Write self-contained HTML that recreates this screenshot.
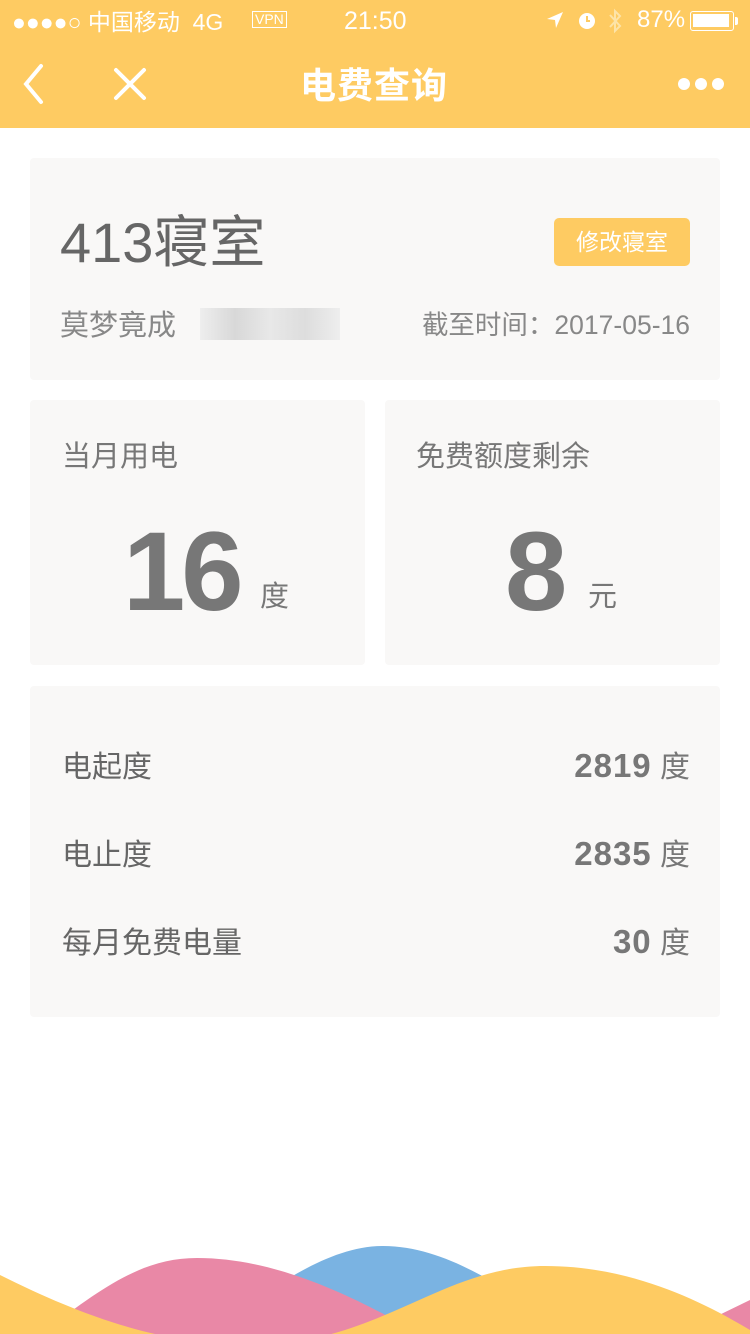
<!DOCTYPE html>
<html><head><meta charset="utf-8"><style>
*{margin:0;padding:0;box-sizing:border-box}
body{width:750px;height:1334px;background:#fff;position:relative;overflow:hidden;font-family:"Liberation Sans","Noto Sans CJK SC",sans-serif;color:#666}
.hdr{position:absolute;left:0;top:0;width:750px;height:128px;background:#fecb62;color:#fff}
.abs{position:absolute;white-space:nowrap;line-height:1.2}
.card{position:absolute;background:#f9f8f7;border-radius:4px}
</style></head><body>
<div class="hdr">
 <div class="abs" style="left:12px;top:9px;font-size:23px">●●●●○ 中国移动&nbsp;&nbsp;4G</div>
 <div class="abs" style="left:252px;top:11px;font-size:14px;border:1.5px solid #fff;padding:0 2px;line-height:15px">VPN</div>
 <div class="abs" style="left:344px;top:6px;font-size:25px">21:50</div>
 <svg class="abs" style="left:545px;top:10px" width="20" height="20"><path d="M2 9 L18 2 L11 18 L10 10 Z" fill="#fff"/></svg>
 <svg class="abs" style="left:576px;top:9px" width="22" height="22"><circle cx="11" cy="12" r="8" fill="#fff"/><path d="M11 7 V12 H14" stroke="#fecb62" stroke-width="2" fill="none"/></svg>
 <svg class="abs" style="left:607px;top:8px" width="16" height="26"><path d="M3 7 L13 18 L8 23 V3 L13 8 L3 19" stroke="#fde4a8" stroke-width="2" fill="none"/></svg>
 <div class="abs" style="left:637px;top:6px;font-size:24px">87%</div>
 <div class="abs" style="left:690px;top:11px;width:44px;height:20px;border:1.5px solid #fff;border-radius:3px;padding:2px"><div style="width:36px;height:13px;background:#fff"></div></div>
 <div class="abs" style="left:735px;top:17px;width:3px;height:8px;background:#fff;border-radius:0 2px 2px 0"></div>
 <svg class="abs" style="left:18px;top:62px" width="30" height="44"><path d="M23 4 L8 22 L23 40" stroke="#fff" stroke-width="4" fill="none" stroke-linecap="round"/></svg>
 <svg class="abs" style="left:113px;top:67px" width="34" height="34"><path d="M3 3 L31 31 M31 3 L3 31" stroke="#fff" stroke-width="4" stroke-linecap="round"/></svg>
 <div class="abs" style="left:300px;top:68px;font-size:36px;font-weight:bold;letter-spacing:1px;line-height:1">电费查询</div>
 <svg class="abs" style="left:676px;top:75px" width="50" height="18"><circle cx="8" cy="9" r="6" fill="#fff"/><circle cx="25" cy="9" r="6" fill="#fff"/><circle cx="42" cy="9" r="6" fill="#fff"/></svg>
</div>

<div class="card" style="left:30px;top:158px;width:690px;height:222px">
 <div class="abs" style="left:30px;top:57px;font-size:56px;color:#666;line-height:1">413寝室</div>
 <div class="abs" style="left:524px;top:60px;width:136px;height:48px;background:#fecb62;border-radius:5px;color:#fff;font-size:23px;text-align:center;line-height:48px">修改寝室</div>
 <div class="abs" style="left:30px;top:154px;font-size:29px;color:#888;line-height:1">莫梦竟成</div>
 <div class="abs" style="left:170px;top:150px;width:140px;height:32px;background:linear-gradient(90deg,#eee,#d8d8d8,#e8e8e8,#ddd,#eee)"></div>
 <div class="abs" style="right:30px;top:154px;font-size:26.5px;color:#888;line-height:1">截至时间：2017-05-16</div>
</div>

<div class="card" style="left:30px;top:400px;width:335px;height:265px">
 <div class="abs" style="left:32px;top:43px;font-size:29px;color:#777;line-height:1">当月用电</div>
 <div class="abs" style="left:93px;top:105px;font-size:112px;font-weight:bold;color:#777;letter-spacing:-4px">16</div>
 <div class="abs" style="left:230px;top:180px;font-size:29px;color:#777">度</div>
</div>
<div class="card" style="left:385px;top:400px;width:335px;height:265px">
 <div class="abs" style="left:31px;top:43px;font-size:29px;color:#777;line-height:1">免费额度剩余</div>
 <div class="abs" style="left:120px;top:105px;font-size:112px;font-weight:bold;color:#777">8</div>
 <div class="abs" style="left:203px;top:180px;font-size:29px;color:#777">元</div>
</div>

<div class="card" style="left:30px;top:686px;width:690px;height:331px">
 <div class="abs" style="left:32px;top:67px;font-size:30px;color:#666;line-height:1">电起度</div>
 <div class="abs" style="right:30px;top:63px;font-size:30px;color:#777;line-height:1"><b style="font-size:33px;letter-spacing:1px">2819</b> 度</div>
 <div class="abs" style="left:32px;top:155px;font-size:30px;color:#666;line-height:1">电止度</div>
 <div class="abs" style="right:30px;top:151px;font-size:30px;color:#777;line-height:1"><b style="font-size:33px;letter-spacing:1px">2835</b> 度</div>
 <div class="abs" style="left:32px;top:243px;font-size:30px;color:#666;line-height:1">每月免费电量</div>
 <div class="abs" style="right:30px;top:239px;font-size:30px;color:#777;line-height:1"><b style="font-size:33px;letter-spacing:1px">30</b> 度</div>
</div>

<svg class="abs" style="left:0;top:1220px" width="750" height="114">
 <path d="M200 114 C260 80 320 26 383 26 C440 26 490 60 540 90 L560 114 Z" fill="#7ab3e2"/>
 <path d="M40 114 C100 70 140 38 197 38 C280 38 360 80 420 114 Z" fill="#e988a6"/>
 <path d="M680 114 L750 80 L750 114 Z" fill="#e988a6"/>
 <path d="M0 55 C80 95 160 125 250 125 C380 125 440 46 545 46 C630 46 700 80 750 110 L750 114 L0 114 Z" fill="#fecb62"/>
</svg>
</body></html>
